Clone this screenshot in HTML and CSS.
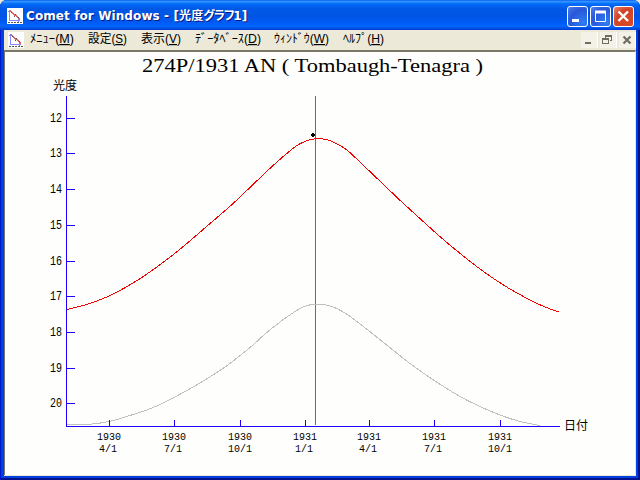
FILE: index.html
```
<!DOCTYPE html>
<html lang="ja">

<head>
    <meta charset="utf-8">
    <title>Comet for Windows</title>
    <link rel="stylesheet" href="styles.css">
</head>

<body>
    <div class="window">
        <div class="titlebar">
            <svg class="icon" width="16" height="16" shape-rendering="crispEdges">
                <rect width="16" height="16" fill="#fff" />
                <path d="M2.5 2V12.5H13M1 3.5H4M11.5 11V14" fill="none" stroke="#8888ff" />
                <path d="M3 3L13 11" fill="none" stroke="#d86060" stroke-width="1.5" />
                <path d="M4 4.5h1M8 6.5h1M7 8.5h1M11 9.5h1" stroke="#555" />
                <path d="M1 14.5H15" stroke="#555" stroke-dasharray="2 1" />
            </svg>
            <span class="caption">Comet for Windows - [光度<span class="kana">グラフ</span>1]</span>
            <div class="buttons">
                <div class="button"><svg width="19" height="19"><path d="M4 13.5H11" stroke="#fff" stroke-width="3" /></svg></div>
                <div class="button"><svg width="19" height="19"><path d="M4.5 4V14.5H14.5V4" fill="none" stroke="#fff" /><path d="M4 5H15" stroke="#fff" stroke-width="3" /></svg></div>
                <div class="button close"><svg width="19" height="19"><path d="M4.5 4.5L14 14M14 4.5L4.5 14" stroke="#fff" stroke-width="2.4" /></svg></div>
            </div>
        </div>
        <div class="menubar">
            <svg class="icon" width="16" height="16" shape-rendering="crispEdges">
                <rect width="16" height="16" fill="#fff" />
                <path d="M2.5 2V12.5H13M1 3.5H4M11.5 11V14" fill="none" stroke="#8888ff" />
                <path d="M3 3L13 11" fill="none" stroke="#d86060" stroke-width="1.5" />
                <path d="M4 4.5h1M8 6.5h1M7 8.5h1M11 9.5h1" stroke="#555" />
                <path d="M1 14.5H15" stroke="#555" stroke-dasharray="2 1" />
            </svg>
            <svg class="menu" width="560" height="20">
                <text x="1" y="13" textLength="44" lengthAdjust="spacingAndGlyphs">ﾒﾆｭｰ(<tspan class="key">M</tspan>)</text>
                <text x="59" y="13" textLength="39" lengthAdjust="spacingAndGlyphs">設定(<tspan class="key">S</tspan>)</text>
                <text x="112" y="13" textLength="40" lengthAdjust="spacingAndGlyphs">表示(<tspan class="key">V</tspan>)</text>
                <text x="166" y="13" textLength="66" lengthAdjust="spacingAndGlyphs">ﾃﾞｰﾀﾍﾞｰｽ(<tspan class="key">D</tspan>)</text>
                <text x="245" y="13" textLength="55" lengthAdjust="spacingAndGlyphs">ｳｨﾝﾄﾞｳ(<tspan class="key">W</tspan>)</text>
                <text x="314" y="13" textLength="41" lengthAdjust="spacingAndGlyphs">ﾍﾙﾌﾟ(<tspan class="key">H</tspan>)</text>
            </svg>
            <div class="mdi">
                <div class="small"><svg width="16" height="16"><path d="M4 11H10" stroke="#6f6d60" stroke-width="2" /></svg></div>
                <div class="small"><svg width="16" height="16" fill="none" stroke="#6f6d60" shape-rendering="crispEdges"><path d="M5.5 6V3.5H11.5V8.5H10M5 4.5H12M2.5 6.5H8.5V11.5H2.5ZM2 7.5H9" /></svg></div>
                <div class="small"><svg width="16" height="16"><path d="M4.5 4.5L11.5 11.5M11.5 4.5L4.5 11.5" stroke="#6f6d60" stroke-width="2.2" /></svg></div>
            </div>
        </div>
        <div class="client">
            <svg class="chart" width="629" height="421" viewBox="5 52 629 421">
                <text class="heading" x="142" y="72" textLength="341" lengthAdjust="spacingAndGlyphs">274P/1931 AN ( Tombaugh-Tenagra )</text>
                <text class="jp" x="53" y="90" textLength="24">光度</text>
                <text class="jp" x="564" y="430" textLength="24">日付</text>
                <path class="marker" d="M315.5 96V425" />
                <path id="gray" class="curve gray" />
                <path id="red" class="curve red" />
                <path d="M312 133h2v1h1v2h-1v1h-2v-1h-1v-2h1z" />
                <path class="axis" d="M66.5 96V426.5" />
                <path class="axis" d="M66 426.5H560" />
                <g id="ticks"></g>
            </svg>
        </div>
    </div>
    <script src="chart.js"></script>
</body>

</html>
```
FILE: styles.css
```
body {
    margin: 0;
    background-color: #ece9d8;
    font-family: "Liberation Sans", "Noto Sans CJK JP", sans-serif;
}

.window {
    display: flex;
    flex-direction: column;
    box-sizing: border-box;
    width: 640px;
    height: 480px;
    padding: 0 4px 4px;
    background-color: #0040e0;
    border-radius: 7px 7px 0 0;
    box-shadow: inset 1px 0 #0019cf, inset -2px -2px #00138c;
    overflow: hidden;
}

.titlebar {
    display: flex;
    align-items: center;
    height: 30px;
    margin: 0 -4px;
    padding: 2px 6px 0 7px;
    box-sizing: border-box;
    background: linear-gradient(#0058ee 0, #3593ff 4%, #288eff 7%, #036ffc 12%, #0262ee 20%, #0057e5 30%, #0055e5 55%, #005bf5 75%, #0066ff 88%, #0050e0 94%, #003dd7 100%);
}

.icon {
    flex: none;
}

.caption {
    margin-left: 3px;
    color: #fff;
    font: bold 12px/16px "DejaVu Sans", "Noto Sans CJK JP", sans-serif;
    letter-spacing: 0.1px;
    text-shadow: 1px 1px #0a1883;
    white-space: nowrap;
}

.kana {
    letter-spacing: -2px;
}

.buttons {
    display: flex;
    gap: 2px;
    margin-left: auto;
}

.button {
    width: 19px;
    height: 19px;
    border: 1px solid #fff;
    border-radius: 3px;
    background: radial-gradient(circle at 80% 80%, #2f7cf5, #2858d8 60%, #4f80ee);
}

.close {
    background: radial-gradient(circle at 80% 80%, #d84a20, #d0442a 60%, #ea8a70);
}

.button svg,
.small svg,
.menu,
.chart {
    display: block;
}

.menubar {
    display: flex;
    align-items: center;
    height: 20px;
    padding-left: 4px;
    background-color: #ece9d8;
}

.menu {
    margin-left: 5px;
    flex: 1;
    min-width: 0;
    font-size: 12px;
}

.key {
    text-decoration: underline;
}

.mdi {
    display: flex;
    gap: 2px;
}

.small {
    width: 16px;
    height: 16px;
    background-color: #f3f1e8;
    border-right: 1px solid #fff;
}

.client {
    flex: 1;
    border: 1px solid #ece9d8;
    border-top: 2px solid #7b7868;
    border-left: 0;
    background-color: #fefefc;
    box-shadow: inset 1px 0 #7b7868;
    overflow: hidden;
}

.chart {
    margin-left: 1px;
}

.heading {
    font-family: "Liberation Serif", serif;
    font-size: 19px;
}

.jp {
    font-family: "Noto Sans CJK JP", sans-serif;
    font-size: 12px;
}

.num {
    font-family: "Liberation Mono", monospace;
    font-size: 12px;
}

.date {
    font-size: 11px;
}

.axis,
.marker,
.curve {
    fill: none;
    stroke-width: 1;
    shape-rendering: crispEdges;
}

.axis {
    stroke: #1c00ff;
}

.marker {
    stroke: #e614ea;
}

.red {
    stroke: #f00000;
}

.gray {
    stroke: #c0c0c0;
}
```
FILE: chart.js
```
var red = [[67, 309.5], [88, 304], [110, 295.5], [138, 280], [174, 254], [213, 221], [232, 204.5], [252, 185.5], [272, 166.5], [287, 153.3], [297, 145.5], [306, 141], [314, 139], [322, 138.8], [331, 141], [340, 145.5], [347, 150], [363, 165], [383, 184], [397, 197.5], [410, 209.5], [426, 224], [437, 234], [455, 249.3], [480, 269], [505, 286], [530, 300], [545, 307], [559, 312]];
var gray = [[67, 424.5], [88, 424.5], [110, 421.3], [130, 415.5], [152, 408], [174, 397.5], [200, 383], [225, 367], [250, 347.5], [267, 332.3], [282, 320.5], [292, 313.5], [303, 307], [312, 304.5], [322, 304.5], [332, 306.5], [345, 313], [355, 320], [376, 336.5], [396, 352.5], [410, 363.5], [435, 381], [460, 396.5], [480, 406.5], [500, 415], [520, 421.5], [540, 425.5]];

// smooth line through all the points
function curve(id, p) {
    var d = 'M' + p[0];
    for (var i = 0; i < p.length - 1; i++) {
        var a = p[Math.max(i - 1, 0)], b = p[i], c = p[i + 1], e = p[Math.min(i + 2, p.length - 1)];
        var w = c[0] - b[0];
        var s1 = (c[1] - a[1]) / (c[0] - a[0]);
        var s2 = (e[1] - b[1]) / (e[0] - b[0]);
        d += 'C' + [b[0] + w / 3, b[1] + s1 * w / 3, c[0] - w / 3, c[1] - s2 * w / 3, c[0], c[1]];
    }
    document.getElementById(id).setAttribute('d', d);
}

curve('red', red);
curve('gray', gray);

function label(text, x, y, cls) {
    return '<text class="num ' + cls + '" x="' + x + '" y="' + y + '" textLength="' + text.length * 6 + '" lengthAdjust="spacingAndGlyphs">' + text + '</text>';
}

var html = '';
var yTicks = [118, 153, 189, 225, 261, 296, 332, 368, 403];
yTicks.forEach(function (y, i) {
    html += '<path class="axis" d="M67 ' + (y + 0.5) + 'H75" />' + label(String(12 + i), 50, y + 4, '');
});

var xTicks = [[109, '1930', '4/1'], [174, '1930', '7/1'], [240, '1930', '10/1'], [305, '1931', '1/1'], [369, '1931', '4/1'], [434, '1931', '7/1'], [500, '1931', '10/1']];
xTicks.forEach(function (t) {
    html += '<path class="axis" d="M' + (t[0] + 0.5) + ' 420V426" />';
    html += label(t[1], t[0] - 12, 440, 'date');
    html += label(t[2], t[2].length == 3 ? t[0] - 10 : t[0] - 12, 452, 'date');
});
document.getElementById('ticks').innerHTML = html;
```
